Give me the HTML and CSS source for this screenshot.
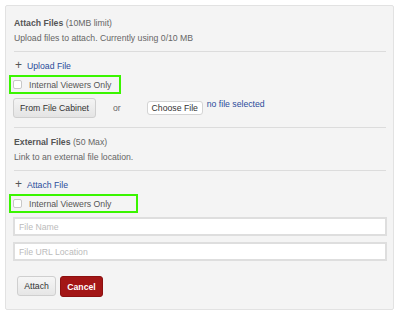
FILE: index.html
```html
<!DOCTYPE html>
<html lang="en">
<head>
    <meta charset="UTF-8">
    <title>Attach Files</title>
    <link rel="stylesheet" href="styles.css">
</head>
<body>
    <div class="panel">
        <div class="section-title"><b>Attach Files</b> (10MB limit)</div>
        <div class="section-desc">Upload files to attach. Currently using 0/10 MB</div>
        <div class="divider"></div>

        <div class="add-link"><span class="plus">+</span><a href="#">Upload File</a></div>
        <label class="highlight hl-upload">
            <span class="check"></span>Internal Viewers Only
        </label>
        <div class="upload-row">
            <button class="btn btn-cabinet">From File Cabinet</button>
            <span class="or">or</span>
            <button class="btn btn-choose">Choose File</button>
            <span class="no-file">no file selected</span>
        </div>
        <div class="divider divider-mid"></div>

        <div class="section-title"><b>External Files</b> (50 Max)</div>
        <div class="section-desc">Link to an external file location.</div>
        <div class="divider"></div>

        <div class="add-link"><span class="plus">+</span><a href="#">Attach File</a></div>
        <label class="highlight hl-external">
            <span class="check"></span>Internal Viewers Only
        </label>
        <input class="field" type="text" placeholder="File Name">
        <input class="field" type="text" placeholder="File URL Location">

        <div class="actions">
            <button class="btn btn-attach">Attach</button>
            <button class="btn btn-cancel">Cancel</button>
        </div>
    </div>
</body>
</html>
```

FILE: styles.css
```css
body {
    margin: 0;
    background: #fff;
    font-family: "Liberation Sans", Arial, sans-serif;
    font-size: 8.7px;
    color: #555;
}
.panel {
    margin: 5px 0 0 5px;
    width: 372px;
    height: 293px;
    padding: 10px 7px 0 8px;
    background: #f4f4f4;
    border: 1px solid #e2e2e2;
    border-radius: 2px;
}
.section-title {
    line-height: 14px;
    color: #666;
}
.section-title b {
    color: #555;
}
.section-desc {
    line-height: 15px;
    margin-top: 1px;
    color: #666;
}
.divider {
    height: 1px;
    background: #dcdcdc;
    margin-top: 5px;
}
.divider-mid {
    margin-top: 9px;
    margin-bottom: 7px;
}
.add-link {
    margin-top: 6px;
    line-height: 14px;
}
.plus {
    display: inline-block;
    width: 12px;
    margin-left: 1px;
    font-size: 12px;
    color: #555;
}
.add-link a {
    color: #2b4c9b;
    text-decoration: none;
}
.highlight {
    display: flex;
    align-items: center;
    box-sizing: border-box;
    margin: 2px 0 0 -5px;
    height: 19px;
    padding-left: 2px;
    border: 2px solid #3af500;
    white-space: nowrap;
    color: #555;
}
.hl-upload {
    width: 112px;
}
.hl-external {
    width: 129px;
    margin-top: 2px;
}
.check {
    display: inline-block;
    width: 7px;
    height: 7px;
    margin-right: 7px;
    background: #fff;
    border: 1px solid #c8c8c8;
    border-radius: 2px;
}
.upload-row {
    display: flex;
    align-items: center;
    margin: 4px 0 0 -1px;
}
.btn {
    font-family: "Liberation Sans", Arial, sans-serif;
    font-size: 8.7px;
    color: #333;
    cursor: pointer;
}
.btn-cabinet {
    height: 20px;
    width: 83px;
    padding: 0;
    background: linear-gradient(#f4f4f4, #e4e4e4);
    border: 1px solid #cfcfcf;
    border-radius: 3px;
}
.or {
    margin-left: 17px;
    color: #666;
}
.btn-choose {
    margin-left: 26px;
    height: 14px;
    width: 56px;
    padding: 0;
    background: #fff;
    border: 1px solid #d4d4d4;
    border-radius: 3px;
}
.no-file {
    margin-left: 4px;
    align-self: flex-start;
    margin-top: 1px;
    color: #2b4c9b;
}
.field {
    display: block;
    box-sizing: border-box;
    width: 374px;
    height: 19px;
    margin: 4px 0 0 -1px;
    padding: 0 4px;
    background: #fff;
    border: 2px solid #dedede;
    font-family: "Liberation Sans", Arial, sans-serif;
    font-size: 8.7px;
}
.field + .field {
    margin-top: 6px;
}
.field::placeholder {
    color: #bbb;
}
.actions {
    display: flex;
    gap: 4px;
    margin: 15px 0 0 3px;
}
.btn-attach {
    height: 20px;
    width: 39px;
    padding: 0;
    background: linear-gradient(#f6f6f6, #e6e6e6);
    border: 1px solid #cfcfcf;
    border-radius: 3px;
}
.btn-cancel {
    height: 21px;
    width: 43px;
    padding: 0;
    background: #a31616;
    border: 1px solid #8c1010;
    border-radius: 3px;
    color: #fff;
    font-weight: bold;
}
```
